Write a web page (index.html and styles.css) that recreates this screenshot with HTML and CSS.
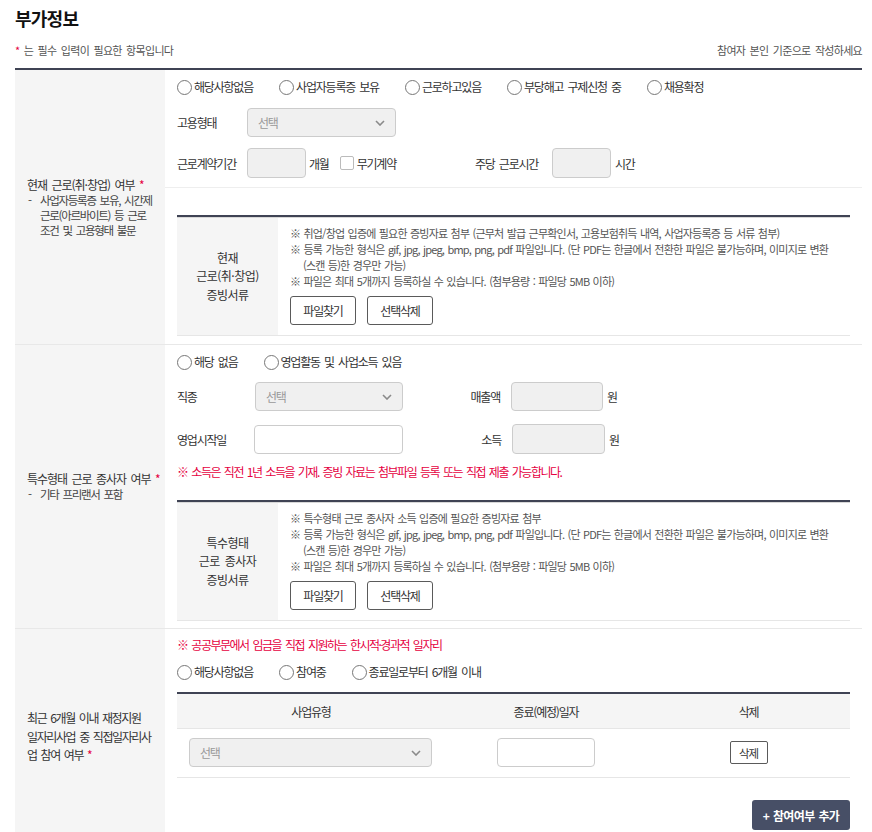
FILE: index.html
```html
<!DOCTYPE html>
<html lang="ko">
<head>
<meta charset="utf-8">
<title>부가정보</title>
<link rel="stylesheet" href="styles.css">
</head>
<body>
<div class="wrap">
  <h2 class="title">부가정보</h2>
  <div class="sub-head">
    <p><span class="req">*</span> 는 필수 입력이 필요한 항목입니다</p>
    <p>참여자 본인 기준으로 작성하세요</p>
  </div>

  <div class="form">
    <!-- Section 1 -->
    <div class="row">
      <div class="th">
        <div>
          <p class="th-title">현재 근로(취·창업) 여부 <span class="req">*</span></p>
          <p class="th-desc"><span class="dash">-</span><span>사업자등록증 보유, 시간제<br>근로(아르바이트) 등 근로<br>조건 및 고용형태 불문</span></p>
        </div>
      </div>
      <div class="td">
        <div class="part part-a1">
          <div class="radios">
            <label class="radio"><span class="circle"></span>해당사항없음</label>
            <label class="radio"><span class="circle"></span>사업자등록증 보유</label>
            <label class="radio"><span class="circle"></span>근로하고있음</label>
            <label class="radio"><span class="circle"></span>부당해고 구제신청 중</label>
            <label class="radio"><span class="circle"></span>채용확정</label>
          </div>
          <div class="line l1">
            <span class="lbl w70">고용형태</span>
            <div class="select s149"><span>선택</span><svg width="10" height="6" viewBox="0 0 10 6"><polyline points="1,1 5,5 9,1" fill="none" stroke="#8a8a8a" stroke-width="1.6"/></svg></div>
          </div>
          <div class="line l2">
            <div class="grp g298">
              <span class="lbl w70">근로계약기간</span>
              <span class="input dis w59 h30"></span>
              <span class="unit">개월</span>
              <span class="check"></span>
              <span class="unit">무기계약</span>
            </div>
            <span class="lbl w77">주당 근로시간</span>
            <span class="input dis w59 h30"></span>
            <span class="unit u4">시간</span>
          </div>
        </div>
        <div class="part part-b1">
          <div class="ev">
            <div class="ev-th">현재<br>근로(취·창업)<br>증빙서류</div>
            <div class="ev-td">
              <p class="note">※ 취업/창업 입증에 필요한 증빙자료 첨부 (근무처 발급 근무확인서, 고용보험취득 내역, 사업자등록증 등 서류 첨부)</p>
              <p class="note">※ 등록 가능한 형식은 gif, jpg, jpeg, bmp, png, pdf 파일입니다. (단 PDF는 한글에서 전환한 파일은 불가능하며, 이미지로 변환<br>(스캔 등)한 경우만 가능)</p>
              <p class="note">※ 파일은 최대 5개까지 등록하실 수 있습니다. (첨부용량 : 파일당 5MB 이하)</p>
              <div class="btns"><button class="btn">파일찾기</button><button class="btn">선택삭제</button></div>
            </div>
          </div>
        </div>
      </div>
    </div>

    <!-- Section 2 -->
    <div class="row">
      <div class="th">
        <div>
          <p class="th-title">특수형태 근로 종사자 여부 <span class="req">*</span></p>
          <p class="th-desc"><span class="dash">-</span><span>기타 프리랜서 포함</span></p>
        </div>
      </div>
      <div class="td">
        <div class="part part-a2">
          <div class="radios">
            <label class="radio"><span class="circle"></span>해당 없음</label>
            <label class="radio"><span class="circle"></span>영업활동 및 사업소득 있음</label>
          </div>
          <div class="line m11">
            <div class="grp g226">
              <span class="lbl w78">직종</span>
              <div class="select s148"><span>선택</span><svg width="10" height="6" viewBox="0 0 10 6"><polyline points="1,1 5,5 9,1" fill="none" stroke="#8a8a8a" stroke-width="1.6"/></svg></div>
            </div>
            <span class="lbl rlbl">매출액</span>
            <span class="input dis w92 h29"></span>
            <span class="unit u4">원</span>
          </div>
          <div class="line m13">
            <div class="grp g226">
              <span class="lbl w77">영업시작일</span>
              <span class="input w149 h29"></span>
            </div>
            <span class="lbl rlbl r2">소득</span>
            <span class="input dis w93 h30"></span>
            <span class="unit u4">원</span>
          </div>
          <p class="red-note m10">※ 소득은 직전 1년 소득을 기재. 증빙 자료는 첨부파일 등록 또는 직접 제출 가능합니다.</p>
        </div>
        <div class="part part-b2">
          <div class="ev">
            <div class="ev-th">특수형태<br>근로 종사자<br>증빙서류</div>
            <div class="ev-td">
              <p class="note">※ 특수형태 근로 종사자 소득 입증에 필요한 증빙자료 첨부</p>
              <p class="note">※ 등록 가능한 형식은 gif, jpg, jpeg, bmp, png, pdf 파일입니다. (단 PDF는 한글에서 전환한 파일은 불가능하며, 이미지로 변환<br>(스캔 등)한 경우만 가능)</p>
              <p class="note">※ 파일은 최대 5개까지 등록하실 수 있습니다. (첨부용량 : 파일당 5MB 이하)</p>
              <div class="btns"><button class="btn">파일찾기</button><button class="btn">선택삭제</button></div>
            </div>
          </div>
        </div>
      </div>
    </div>

    <!-- Section 3 -->
    <div class="row">
      <div class="th">
        <div>
          <p class="th-title lh18">최근 6개월 이내 재정지원<br>일자리사업 중 직접일자리사<br>업 참여 여부 <span class="req">*</span></p>
        </div>
      </div>
      <div class="td">
        <div class="part part-a3">
          <p class="red-note">※ 공공부문에서 임금을 직접 지원하는 한시적·경과적 일자리</p>
          <div class="radios m10">
            <label class="radio"><span class="circle"></span>해당사항없음</label>
            <label class="radio"><span class="circle"></span>참여중</label>
            <label class="radio"><span class="circle"></span>종료일로부터 6개월 이내</label>
          </div>
          <div class="tbl">
            <div class="tr thead">
              <div class="c1">사업유형</div>
              <div class="c2">종료(예정)일자</div>
              <div class="c3">삭제</div>
            </div>
            <div class="tr tbody">
              <div class="c1"><div class="select s243"><span>선택</span><svg width="10" height="6" viewBox="0 0 10 6"><polyline points="1,1 5,5 9,1" fill="none" stroke="#8a8a8a" stroke-width="1.6"/></svg></div></div>
              <div class="c2"><span class="input w98 h29"></span></div>
              <div class="c3"><button class="btn small">삭제</button></div>
            </div>
          </div>
          <div class="add-wrap"><button class="add-btn">+ 참여여부 추가</button></div>
        </div>
      </div>
    </div>
  </div>
</div>
</body>
</html>
```

FILE: styles.css
```css
* { box-sizing: border-box; margin: 0; padding: 0; }
body {
  margin: 0;
  font-family: "Noto Sans CJK KR", "Noto Sans", sans-serif;
  font-size: 12px;
  letter-spacing: -1.2px;
  word-spacing: 2px;
  color: #333;
  background: #fff;
}
.wrap { padding: 6px 10px 0 15px; }
.title { font-size: 18px; font-weight: 700; line-height: 24px; color: #111; letter-spacing: -0.75px; word-spacing: 0; }
.sub-head {
  display: flex; justify-content: space-between;
  margin-top: 12px; padding-bottom: 10px;
  font-size: 11px; line-height: 16px; color: #555; letter-spacing: -0.7px;
}
.req { color: #e5003f; }
.form { border-top: 2px solid #3f4354; }
.row { display: grid; grid-template-columns: 150px 1fr; border-bottom: 1px solid #e8e8e8; }
.th { background: #f5f5f5; padding: 0 0 0 12px; display: flex; align-items: center; }
.th-title { line-height: 16px; color: #333; letter-spacing: -1px; white-space: nowrap; }
.th-title.lh18 { line-height: 18.5px; letter-spacing: -1.4px; }
.th-desc { display: flex; font-size: 11.5px; line-height: 15px; color: #444; letter-spacing: -1.3px; }
.dash { width: 13px; flex: none; padding-left: 1px; }

.part { padding: 0 12px; }
.part-a1 { padding-top: 8px; padding-bottom: 9px; border-bottom: 1px solid #eee; }
.part-b1 { padding-top: 27px; padding-bottom: 8px; }
.part-a2 { padding-top: 8px; }
.part-b2 { padding-top: 20px; padding-bottom: 7px; }
.part-a3 { padding-top: 8px; padding-bottom: 15px; }

.radios { display: flex; gap: 26px; height: 18px; align-items: center; }
.radios.m10 { margin-top: 10px; }
.radio { display: flex; align-items: center; line-height: 18px; color: #333; }
.circle {
  width: 15px; height: 15px; border-radius: 50%;
  border: 1px solid #777; background: #fff; margin-right: 2px; flex: none;
}

.line { display: flex; align-items: center; }
.line.l1 { margin-top: 12px; }
.line.l2 { margin-top: 11px; }
.line.m11 { margin-top: 11px; }
.line.m13 { margin-top: 13px; }
.grp { display: flex; align-items: center; flex: none; }
.g298 { width: 298px; }
.g226 { width: 226px; }
.lbl { flex: none; color: #333; }
.w70 { width: 70px; }
.w78 { width: 78px; }
.w77 { width: 77px; }
.rlbl { width: 108px; text-align: right; padding-right: 11px; }
.rlbl.r2 { width: 109px; }

.select {
  display: flex; align-items: center; justify-content: space-between;
  height: 29px; padding: 0 10px 0 10px;
  background: #f0f0f0; border: 1px solid #ccc; border-radius: 4px;
  color: #999; flex: none;
}
.s149 { width: 149px; }
.s148 { width: 148px; }
.s243 { width: 243px; }

.input { display: block; border: 1px solid #ccc; border-radius: 4px; background: #fff; flex: none; }
.input.dis { background: #f0f0f0; }
.w59 { width: 59px; }
.w92 { width: 92px; }
.w93 { width: 93px; }
.w98 { width: 98px; }
.w149 { width: 149px; }
.h29 { height: 29px; }
.h30 { height: 30px; }
.unit { margin-left: 3px; color: #333; }
.unit.u4 { margin-left: 4px; }
.check {
  width: 14px; height: 14px; border: 1px solid #bbb; border-radius: 2px;
  background: #fff; margin-left: 11px; flex: none;
}

.red-note { color: #e5003f; line-height: 16px; letter-spacing: -1.5px; }
.red-note.m10 { margin-top: 10px; }

.ev { display: grid; grid-template-columns: 101px 1fr; border-top: 2px solid #3f4354; border-bottom: 1px solid #e6e6e6; }
.ev-th {
  background: #f5f5f5; border-top: 1px solid #d8d8d8;
  display: flex; align-items: center; justify-content: center;
  text-align: center; line-height: 18.5px; color: #333; letter-spacing: -0.5px;
}
.ev-td { border-top: 1px solid #d8d8d8; padding: 7px 12px 10px 12px; }
.note {
  font-size: 11px; line-height: 16px; color: #555; letter-spacing: -0.8px; word-spacing: 1px;
  padding-left: 13px; text-indent: -13px;
}
.btns { display: flex; gap: 11px; margin-top: 7px; }
.btn {
  font-family: inherit; font-size: 12px; letter-spacing: -1.2px; color: #333;
  width: 66px; height: 29px; background: #fff;
  border: 1px solid #5a5a5a; border-radius: 3px; cursor: pointer;
}
.btn.small { width: 38px; height: 23px; border-radius: 2px; font-size: 11.5px; }

.tbl { margin-top: 11px; border-top: 2px solid #3f4354; }
.tr { display: grid; grid-template-columns: 268px 202px 1fr; border-bottom: 1px solid #e6e6e6; }
.thead { background: #f5f5f5; height: 35px; align-items: center; text-align: center; color: #333; }
.tbody { padding: 9px 0 10px; align-items: center; }
.tbody .c1 { padding-left: 12px; }
.tbody .c2, .tbody .c3 { display: flex; justify-content: center; }

.add-wrap { display: flex; justify-content: flex-end; margin-top: 22px; }
.add-btn {
  font-family: inherit; font-size: 12px; font-weight: 700; letter-spacing: -0.6px; word-spacing: 1px;
  color: #fff; background: #474f66; border: none; border-radius: 3px;
  width: 98px; height: 30px;
}
```
